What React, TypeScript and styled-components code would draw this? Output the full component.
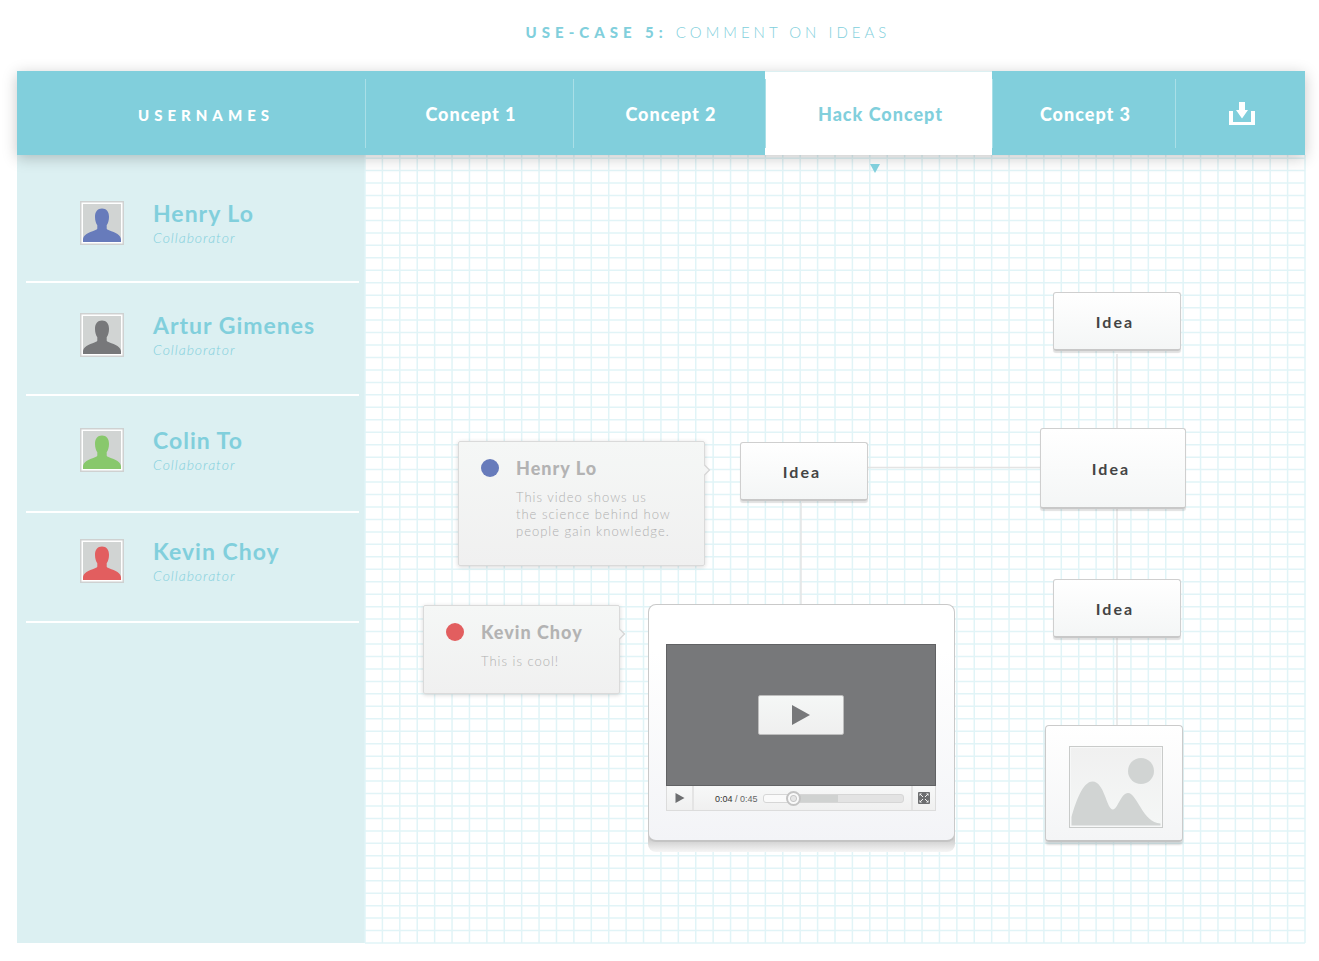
import React from "react";
import styled, { createGlobalStyle, css } from "styled-components";

const aqua = "#81cfdc";
const mist = "#dcf0f2";

const GlobalStyle = createGlobalStyle`
  *, *::before, *::after { box-sizing: border-box; }
  body {
    margin: 0;
    background: #fff;
    font-family: Lato, "Open Sans", sans-serif;
  }
  button { font: inherit; border: 0; padding: 0; cursor: pointer; }
  h1, h2, h3, p, ul { margin: 0; padding: 0; }
`;

const Page = styled.div`
  display: flex;
  flex-direction: column;
  min-height: 100vh;
  min-width: 1240px;
  padding: 0 14px 18px 17px;
`;

const Title = styled.h1`
  padding: 22px 0 29px 94px;
  color: ${aqua};
  font-size: 15px;
  line-height: 20px;
  font-weight: 300;
  letter-spacing: 4px;
  text-align: center;
  text-transform: uppercase;

  strong { font-weight: 900; letter-spacing: 5px; }
`;

const TopBar = styled.header`
  position: relative;
  z-index: 2;
  display: grid;
  grid-template-columns: 348px 1fr;
  height: 84px;
  background: ${aqua};
  box-shadow: 0 3px 14px rgba(0, 0, 0, 0.22);
`;

const SideHeading = styled.h2`
  display: flex;
  align-items: center;
  justify-content: center;
  padding: 4px 0 0 30px;
  color: #fff;
  font-size: 15px;
  font-weight: 900;
  letter-spacing: 5px;
  text-transform: uppercase;
`;

const Tabs = styled.nav`
  display: grid;
  grid-template-columns: 208fr 192fr 227fr 183fr 130fr;
`;

const Tab = styled.button<{ $active?: boolean }>`
  position: relative;
  display: flex;
  align-items: center;
  justify-content: center;
  padding: 2px 0 0 4px;
  background: ${(p) => (p.$active ? "#fff" : "transparent")};
  color: ${(p) => (p.$active ? aqua : "#fff")};
  font-size: 18px;
  font-weight: 900;
  letter-spacing: 1px;

  &::before {
    content: "";
    position: absolute;
    left: 0;
    top: 8px;
    bottom: 7px;
    width: 1px;
    background: #a9dfe7;
  }

  ${(p) =>
    p.$active &&
    css`
      box-shadow: inset 0 1px ${mist};

      &::after {
        content: "";
        position: absolute;
        top: 93px;
        left: calc(50% - 9px);
        border: solid transparent;
        border-width: 9px 5px 0;
        border-top-color: ${aqua};
      }
    `}
`;

const Body = styled.main`
  display: grid;
  grid-template-columns: 348px 1fr;
  flex: 1;
`;

const Sidebar = styled.aside`
  background: ${mist};
`;

const UserList = styled.ul`
  padding: 0 6px 0 9px;
  list-style: none;
`;

const UserRow = styled.li<{ $above: number; $below: number }>`
  display: flex;
  gap: 29px;
  padding: ${(p) => p.$above}px 0 ${(p) => p.$below}px 54px;
  border-bottom: 2px solid #fff;
`;

const Avatar = styled.svg`
  display: block;
  width: 44px;
  height: 44px;
`;

const UserName = styled.h3`
  color: ${aqua};
  font-size: 23px;
  line-height: 24px;
  font-weight: 700;
  letter-spacing: 1px;
`;

const Role = styled.p`
  color: ${aqua};
  font-size: 14px;
  line-height: 26px;
  font-style: italic;
  font-weight: 300;
  letter-spacing: 1px;
`;

const Canvas = styled.section`
  position: relative;
  min-height: 740px;
`;

const Layer = styled.svg`
  position: absolute;
  inset: 0;
  width: 100%;
  height: 100%;
  overflow: visible;
`;

type Place = { $x: number; $y: number; $w: number; $h: number };

const Placed = styled.article<Place>`
  position: absolute;
  left: ${(p) => p.$x}px;
  top: ${(p) => p.$y}px;
  width: ${(p) => p.$w}px;
  height: ${(p) => p.$h}px;
`;

const IdeaNode = styled(Placed)`
  display: flex;
  align-items: center;
  justify-content: center;
  padding-right: 4px;
  border: 1px solid #cfcfcf;
  border-bottom: 2px solid #c8c8c8;
  border-radius: 3px;
  background: linear-gradient(#fff, #f4f6f6);
  box-shadow: 0 2px 1px rgba(0, 0, 0, 0.12);
  color: #444;
  font-size: 16px;
  font-weight: 700;
  letter-spacing: 2px;
`;

const CommentCard = styled(Placed)`
  display: grid;
  grid-template-columns: 18px 1fr;
  column-gap: 17px;
  align-content: start;
  align-items: center;
  padding: 13px 0 0 22px;
  border: 1px solid #dadada;
  border-radius: 2px;
  background: linear-gradient(#f5f7f6, #f0f0f0);
  box-shadow: 0 1px 4px rgba(0, 0, 0, 0.16);
`;

const Pointer = styled.svg`
  position: absolute;
  left: 100%;
  top: 22px;
  width: 8px;
  height: 12px;
`;

const Dot = styled.span<{ $color: string }>`
  width: 18px;
  height: 18px;
  border-radius: 50%;
  background: ${(p) => p.$color};
`;

const Author = styled.h3`
  color: #b3b3b3;
  font-size: 18px;
  line-height: 26px;
  font-weight: 900;
  letter-spacing: 1px;
`;

const Message = styled.p`
  grid-column: 2;
  padding-top: 8px;
  color: #b0b0b0;
  font-size: 13px;
  line-height: 17px;
  font-weight: 300;
  letter-spacing: 1px;
  white-space: pre-line;
`;

const VideoNode = styled(Placed)`
  padding: 39px 18px 0 17px;
  border: 1px solid #c9c9c9;
  border-bottom: 2px solid #c4c4c4;
  border-radius: 8px;
  background: linear-gradient(#fff 20%, #f3f4f7);

  &::before {
    content: "";
    position: absolute;
    z-index: -1;
    inset: auto -1px -12px;
    height: 24px;
    border-radius: 0 0 8px 8px;
    background: linear-gradient(#cfcfcf 50%, #f6f6f6);
  }
`;

const Stack = styled.div`
  position: relative;
  z-index: 0;
`;

const Screen = styled.div`
  display: flex;
  align-items: center;
  justify-content: center;
  height: 142px;
  border: 1px solid #616264;
  background: #77787a;
`;

const BigPlay = styled.button`
  display: grid;
  place-items: center;
  width: 86px;
  height: 40px;
  border: 1px solid #bdbdbd;
  border-radius: 2px;
  background: linear-gradient(#f5f7f6, #efefef);
`;

const Controls = styled.div`
  display: flex;
  align-items: stretch;
  height: 25px;
  border: 1px solid #dcdcdc;
  border-top: 0;
  background: linear-gradient(#f7f8f8, #f0f0f0);
`;

const ControlButton = styled.button<{ $side: "left" | "right" }>`
  display: grid;
  place-items: center;
  width: ${(p) => (p.$side === "left" ? 27 : 24)}px;
  background: transparent;
  border-${(p) => (p.$side === "left" ? "right" : "left")}: 2px solid #e4e4e4;
`;

const Time = styled.span`
  padding: 0 5px 0 21px;
  color: #666;
  font-family: "Liberation Sans", Arial, sans-serif;
  font-size: 9px;
  line-height: 26px;
  white-space: nowrap;

  b { color: #333; font-weight: 400; }
`;

const Seek = styled.input`
  flex: 1;
  min-width: 0;
  height: 24px;
  margin: 0 7px 0 0;
  appearance: none;
  background: transparent;

  &::-webkit-slider-runnable-track {
    height: 9px;
    border: 1px solid #d6d6d6;
    border-radius: 3px;
    background: linear-gradient(90deg, #fafafa 20%, #d0d2d1 20%, #d0d2d1 53%, #e3e3e3 53%);
  }

  &::-webkit-slider-thumb {
    appearance: none;
    width: 15px;
    height: 15px;
    margin-top: -4px;
    border: 2px solid #c4c4c4;
    border-radius: 50%;
    background: radial-gradient(circle, #e6e6e6 2px, #c8c8c8 3px, #fafafa 4px);
  }
`;

const ImageNode = styled(Placed)`
  padding: 20px 0 0 23px;
  border: 1px solid #cbcbcb;
  border-bottom: 2px solid #c4c4c4;
  border-radius: 4px;
  background: linear-gradient(#fff, #f4f5f6);
  box-shadow: 0 3px 2px rgba(0, 0, 0, 0.14);
`;

const users = [
  { name: "Henry Lo", color: "#677bbb", above: 46, below: 30 },
  { name: "Artur Gimenes", color: "#77787a", above: 30, below: 31 },
  { name: "Colin To", color: "#88c86c", above: 32, below: 33 },
  { name: "Kevin Choy", color: "#e25e5f", above: 26, below: 32 },
];

const ideas = [
  { x: 688, y: 137, w: 128, h: 59 },
  { x: 675, y: 273, w: 146, h: 81 },
  { x: 688, y: 424, w: 128, h: 59 },
  { x: 375, y: 287, w: 128, h: 59 },
];

const comments = [
  {
    name: "Henry Lo",
    color: "#677bbb",
    text: "This video shows us\nthe science behind how\npeople gain knowledge.",
    x: 93, y: 286, w: 247, h: 125,
  },
  { name: "Kevin Choy", color: "#e25e5f", text: "This is cool!", x: 58, y: 450, w: 197, h: 89 },
];

const COLUMNS = 54;
const ROWS = 63;

function GraphPaper() {
  return (
    <Layer aria-hidden="true" stroke="#e1f4f7" strokeWidth="1.5">
      {Array.from({ length: COLUMNS + 1 }, (_, i) => {
        const x = `${(i / COLUMNS) * 100}%`;
        return <line key={`c${i}`} x1={x} x2={x} y1="0" y2="100%" />;
      })}
      {Array.from({ length: ROWS + 1 }, (_, i) => {
        const y = `${100 - (i / ROWS) * 99.6}%`;
        return <line key={`r${i}`} x1="0" x2="100%" y1={y} y2={y} />;
      })}
    </Layer>
  );
}

function Portrait({ color, name }: { color: string; name: string }) {
  return (
    <Avatar viewBox="0 0 44 44" role="img" aria-label={name}>
      <rect x="0.75" y="0.75" width="42.5" height="42.5" fill="#fff" stroke="#cfd1d1" strokeWidth="1.5" />
      <rect x="3" y="3" width="38" height="38" fill="#d1d4d3" />
      <path
        fill={color}
        d="M22 7.500C17.500 7.500 15 10.500 15 16C15 19.500 16 22.500 17.300 24.200V27.500C17.300 28.300 16.500 28.700 15 29.200C8.500 31.500 3 34 3 38.500V41H41V38.500C41 34 35.500 31.500 29 29.200C27.500 28.700 26.700 28.300 26.700 27.500V24.200C28 22.500 29 19.500 29 16C29 10.500 26.500 7.500 22 7.500Z"
      />
    </Avatar>
  );
}

function DownloadIcon() {
  return (
    <svg width="26" height="24" viewBox="0 0 26 24" fill="#fff" aria-hidden="true">
      <path d="M0 9h4v11h18V9h4v14H0z" />
      <path d="M10 0h6v8h3l-6 8.500L7 8h3z" />
    </svg>
  );
}

function FullscreenIcon() {
  return (
    <svg width="12" height="12" viewBox="0 0 12 12" aria-hidden="true">
      <rect width="12" height="12" rx="1" fill="#6d6e70" />
      <path
        d="M1.500 1.500h2.500L1.500 4zM10.500 1.500v2.500L8 1.500zM1.500 10.500V8L4 10.500zM10.500 10.500H8L10.500 8z"
        fill="#f2f2f2"
      />
      <path
        d="M2 2l3 3M10 2L7 5M2 10l3-3M10 10L7 7"
        stroke="#f2f2f2"
        strokeWidth="1"
      />
    </svg>
  );
}

function Landscape() {
  return (
    <svg width="94" height="83" viewBox="0 0 94 83" role="img" aria-label="Picture">
      <defs>
        <linearGradient id="sky" x2="0" y2="1">
          <stop stopColor="#f0f0f0" />
          <stop offset="1" stopColor="#f5f7f6" />
        </linearGradient>
      </defs>
      <rect x="0.500" y="0.500" width="93" height="81" fill="url(#sky)" stroke="#c9cbca" />
      <rect x="1.500" y="1.500" width="91" height="79" fill="none" stroke="#f7f8f8" />
      <circle cx="72" cy="25" r="13" fill="#d1d4d3" />
      <path
        fill="#d1d4d3"
        d="M2.500 79.500V71C7 55 14 35.500 23.500 35.500c12 0 14 28 20.500 28C48.500 63.500 52 47 59 47c9 0 15 30 32.500 30.500v2z"
      />
    </svg>
  );
}

export default function App() {
  return (
    <Page>
      <GlobalStyle />
      <Title>
        <strong>Use-case 5:</strong> Comment on ideas
      </Title>

      <TopBar>
        <SideHeading>Usernames</SideHeading>
        <Tabs>
          <Tab>Concept 1</Tab>
          <Tab>Concept 2</Tab>
          <Tab $active>Hack Concept</Tab>
          <Tab>Concept 3</Tab>
          <Tab aria-label="Download">
            <DownloadIcon />
          </Tab>
        </Tabs>
      </TopBar>

      <Body>
        <Sidebar>
          <UserList>
            {users.map((u) => (
              <UserRow key={u.name} $above={u.above} $below={u.below}>
                <Portrait color={u.color} name={u.name} />
                <div>
                  <UserName>{u.name}</UserName>
                  <Role>Collaborator</Role>
                </div>
              </UserRow>
            ))}
          </UserList>
        </Sidebar>

        <Canvas>
          <GraphPaper />
          <Layer aria-hidden="true" stroke="#e4e4e4" strokeWidth="1.500">
            <line x1="752" x2="752" y1="199" y2="570" />
            <line x1="503" x2="675" y1="312.500" y2="312.500" />
            <line x1="436" x2="436" y1="348" y2="449" />
          </Layer>

          {ideas.map((n, i) => (
            <IdeaNode key={i} $x={n.x} $y={n.y} $w={n.w} $h={n.h}>
              Idea
            </IdeaNode>
          ))}

          {comments.map((c) => (
            <CommentCard key={c.name} $x={c.x} $y={c.y} $w={c.w} $h={c.h}>
              <Dot $color={c.color} />
              <Author>{c.name}</Author>
              <Message>{c.text}</Message>
              <Pointer viewBox="0 0 8 12" aria-hidden="true">
                <path d="M0 1L5.500 6 0 11z" fill="#f4f5f5" />
                <path d="M0.500 1L5.500 6 0.500 11" fill="none" stroke="#d6d6d6" strokeWidth="1.300" />
              </Pointer>
            </CommentCard>
          ))}

          <Stack>
            <VideoNode $x={283} $y={449} $w={307} $h={238}>
              <Screen>
                <BigPlay aria-label="Play video">
                  <svg width="18" height="20" viewBox="0 0 18 20" aria-hidden="true">
                    <path d="M0 0l18 10L0 20z" fill="#77787a" />
                  </svg>
                </BigPlay>
              </Screen>
              <Controls>
                <ControlButton $side="left" aria-label="Play">
                  <svg width="10" height="10" viewBox="0 0 10 10" aria-hidden="true">
                    <path d="M0.500 0l9 5-9 5z" fill="#6d6e70" />
                  </svg>
                </ControlButton>
                <Time>
                  <b>0:04</b> / 0:45
                </Time>
                <Seek type="range" min={0} max={100} defaultValue={18} aria-label="Seek" />
                <ControlButton $side="right" aria-label="Full screen">
                  <FullscreenIcon />
                </ControlButton>
              </Controls>
            </VideoNode>
          </Stack>

          <ImageNode $x={680} $y={570} $w={138} $h={117}>
            <Landscape />
          </ImageNode>
        </Canvas>
      </Body>
    </Page>
  );
}
